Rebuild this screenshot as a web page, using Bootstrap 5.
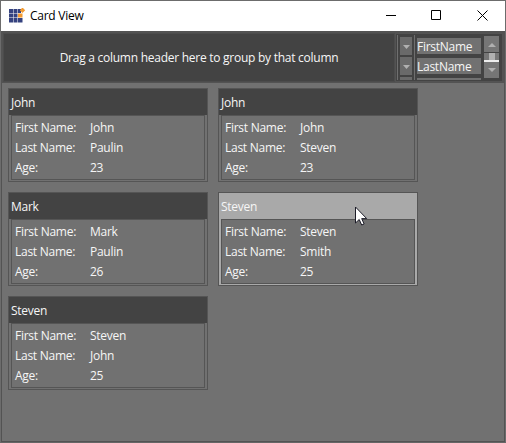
<!DOCTYPE html>
<html lang="en">
<head>
<meta charset="utf-8">
<title>Card View</title>
<link href="https://cdn.jsdelivr.net/npm/bootstrap@5.3.0/dist/css/bootstrap.min.css" rel="stylesheet">
<style>
body{width:506px;height:443px;overflow:hidden;background:#717171;color:#f6f6f6;font:12px/20px "Open Sans","Noto Sans",sans-serif;letter-spacing:-.26px;white-space:nowrap}
.window{width:506px;height:443px;border:1px solid #6c6c6c;border-bottom-color:#666}
.titlebar{height:30px;background:#fff;color:#000}
.app-icon{margin:7px 0 0 8px;width:17px}
.win-title{margin-left:4px;line-height:29px}
.client{border:1px solid #535353;border-top-width:2px;background:#717171}
.topbar{height:50px;background:#535353;padding-left:1px}
.drop-area{width:392px;height:49px;background:#434343;border:1px solid #4c4c4c;padding-top:1px}
.chooser{width:106px;height:47px;margin-left:1px;margin-top:1px;background:#434343;padding-left:1px;overflow:hidden}
.rule{width:1px;height:45px;margin-top:1px;background:#6f6f6f}
.arrows{width:12px;margin:3px 2px 0}
.arrow-btn{height:18px;margin-bottom:2px;background:#6a6a6a}
.arrow-btn:last-child{height:3px}
.fields{width:64px;margin:4px 3px 0 2px}
.field{height:16px;margin-bottom:4px;background:#717171;line-height:17px}
.field:last-child{height:2px}
.scroller{width:15px;margin-top:2px}
.scroll-btn{height:16px;background:#767676}
.thumb{height:7px;margin-top:1px;background:linear-gradient(90deg,#777 0 5px,#b0b0b0 5px 11px,#777 11px)}
.thumb-edge{height:2px;background:#eee}
.cards{display:grid;grid-template-columns:200px 200px;gap:10px;padding:5px 6px}
.data-card{height:94px;border:1px solid #555;padding:0 2px 2px}
.card-head{height:26px;margin:0 -2px;background:#434343;padding-left:2px;line-height:28px}
.card-fields{height:65px;border:1px solid #555;background:#717171;padding:2px 3px}
.card-label{width:75px}
.selected{background:#a9a9a9}
.selected .card-head{background:#a9a9a9}
.pointer{position:absolute;left:355px;top:206px}
svg{display:block}
</style>
<script src="https://cdn.jsdelivr.net/npm/bootstrap@5.3.0/dist/js/bootstrap.bundle.min.js"></script>
</head>
<body>
<div class="window d-flex flex-column">
<header class="titlebar d-flex flex-shrink-0">
<svg class="app-icon" width="17" height="17" viewBox="0 0 17 17"><path fill="#35427f" d="M0 1h4v4H0zM4.500 1h4v4h-4zM9 1h3v4H9zM0 5.500h4v4H0zM4.500 5.500h4v4h-4zM0 10h4v4.500H0zM4.500 10h4v4.500h-4zM9 10h4.500v4.500H9z"/><path fill="#f39a2f" d="M9 5.500h4.500v4H9zM13.500 -.5l2.700 2.700-2.700 2.700-2.700-2.700z"/></svg>
<span class="win-title">Card View</span>
<svg class="ms-auto" width="122" height="29" fill="none" stroke="#000"><path d="M3 14.500h10M48.500 9.500h9v9h-9zM94.500 9.500l10 10M104.500 9.500l-10 10"/></svg>
</header>
<main class="client flex-grow-1">
<section class="topbar d-flex">
<div class="drop-area d-flex align-items-center justify-content-center">Drag a column header here to group by that column</div>
<div class="chooser d-flex">
<div class="rule"></div>
<div class="arrows">
<div class="arrow-btn"><svg width="12" height="18"><path fill="#b0b0b0" d="M3 8h7l-3.500 4z"/></svg></div>
<div class="arrow-btn"><svg width="12" height="18"><path fill="#b0b0b0" d="M3 8h7l-3.500 4z"/></svg></div>
<div class="arrow-btn"></div>
</div>
<div class="rule"></div>
<div class="fields"><div class="field">FirstName</div><div class="field">LastName</div><div class="field"></div></div>
<div class="scroller">
<div class="scroll-btn"><svg width="15" height="16"><path fill="#b0b0b0" d="M4 11h8l-4-4z"/></svg></div>
<div class="thumb"></div><div class="thumb-edge"></div>
<div class="scroll-btn"><svg width="15" height="16"><path fill="#b0b0b0" d="M4 6h8l-4 4z"/></svg></div>
</div>
</div>
</section>
<section class="cards">
<article class="data-card"><div class="card-head">John</div><div class="card-fields"><div class="d-flex"><span class="card-label">First Name:</span><span>John</span></div><div class="d-flex"><span class="card-label">Last Name:</span><span>Paulin</span></div><div class="d-flex"><span class="card-label">Age:</span><span>23</span></div></div></article>
<article class="data-card"><div class="card-head">John</div><div class="card-fields"><div class="d-flex"><span class="card-label">First Name:</span><span>John</span></div><div class="d-flex"><span class="card-label">Last Name:</span><span>Steven</span></div><div class="d-flex"><span class="card-label">Age:</span><span>23</span></div></div></article>
<article class="data-card"><div class="card-head">Mark</div><div class="card-fields"><div class="d-flex"><span class="card-label">First Name:</span><span>Mark</span></div><div class="d-flex"><span class="card-label">Last Name:</span><span>Paulin</span></div><div class="d-flex"><span class="card-label">Age:</span><span>26</span></div></div></article>
<article class="data-card selected"><div class="card-head">Steven</div><div class="card-fields"><div class="d-flex"><span class="card-label">First Name:</span><span>Steven</span></div><div class="d-flex"><span class="card-label">Last Name:</span><span>Smith</span></div><div class="d-flex"><span class="card-label">Age:</span><span>25</span></div></div></article>
<article class="data-card"><div class="card-head">Steven</div><div class="card-fields"><div class="d-flex"><span class="card-label">First Name:</span><span>Steven</span></div><div class="d-flex"><span class="card-label">Last Name:</span><span>John</span></div><div class="d-flex"><span class="card-label">Age:</span><span>25</span></div></div></article>
</section>
</main>
</div>
<svg class="pointer" width="13" height="21" viewBox="0 0 13 21"><path fill="#fff" stroke="#1c1c28" d="M.5 1v16l3.700-3.500 2.500 5.500 2.400-1-2.400-5.400h5z"/></svg>
</body>
</html>
